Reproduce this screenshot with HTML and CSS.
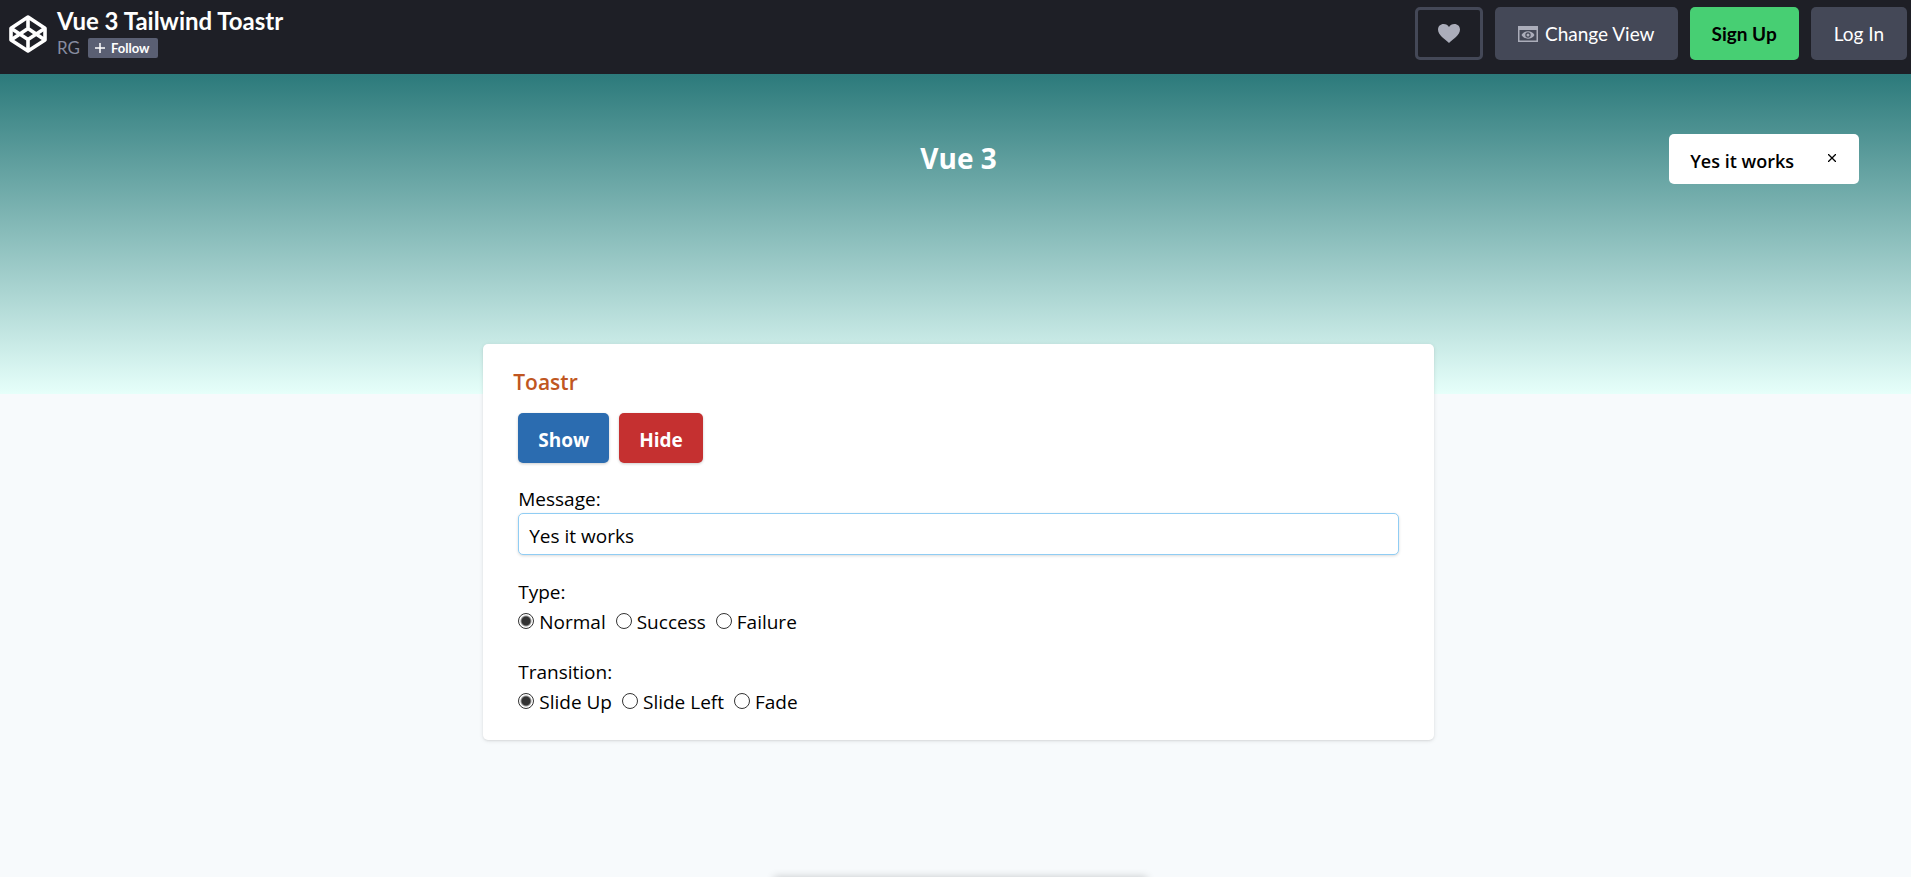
FILE: index.html
```html
<!DOCTYPE html>
<html lang="en">
<head>
<meta charset="utf-8">
<meta name="viewport" content="width=device-width, initial-scale=1">
<title>Vue 3 Tailwind Toastr</title>
<link rel="stylesheet" href="styles.css">
</head>
<body>
<header class="topbar">
  <a class="logo" href="#" aria-label="CodePen">
    <svg viewBox="0 0 38 38" width="38" height="38" fill="none" stroke="#fff" stroke-width="3.6" stroke-linejoin="round">
      <path d="M19 2 36 13.200V25L19 36 2 25V13.200Z"/>
      <path d="M19 2V13.500M19 36V24.500M2 13.200 19 24.500 36 13.200M2 25 19 13.500 36 25"/>
    </svg>
  </a>
  <div class="pen">
    <h1 class="pen-title">Vue 3 Tailwind Toastr</h1>
    <div class="pen-author">
      <a class="author" href="#">RG</a>
      <button class="follow" type="button">
        <svg viewBox="0 0 10 10" width="10" height="10" stroke="#fff" stroke-width="1.500"><path d="M5 0V10M0 5H10"/></svg>
        Follow
      </button>
    </div>
  </div>
  <nav class="actions">
    <button class="btn btn-heart" type="button" aria-label="Love">
      <svg viewBox="0 0 22 19" width="22" height="19" fill="#abadba"><path d="M11 19C7 15.500 0 11 0 5.600 0 2.200 2.500 0 5.600 0 8 0 10 1.200 11 3 12 1.200 14 0 16.400 0 19.500 0 22 2.200 22 5.600 22 11 15 15.500 11 19Z"/></svg>
    </button>
    <button class="btn" type="button">
      <svg viewBox="0 0 20 16" width="20" height="16"><path fill="#abadba" fill-rule="evenodd" d="M0 0H20V16H0ZM1.500 4V14.500H18.500V4Z"/><path fill="#abadba" fill-rule="evenodd" d="M3.500 9C5 6.500 7.300 5.300 10 5.300S15 6.500 16.500 9C15 11.500 12.700 12.700 10 12.700S5 11.500 3.500 9ZM10 6.300A2.700 2.700 0 1 0 10 11.700 2.700 2.700 0 1 0 10 6.300Z"/><circle cx="10" cy="9" r="1.500" fill="#abadba"/></svg>
      Change View
    </button>
    <button class="btn btn-green" type="button">Sign Up</button>
    <button class="btn" type="button">Log In</button>
  </nav>
</header>
<main class="page">
  <section class="hero"><h2 class="hero-title">Vue 3</h2></section>
  <div class="content">
  <form class="card">
    <h3 class="card-title">Toastr</h3>
    <div class="fields">
      <div class="buttons">
        <button class="cta cta-show" type="button">Show</button>
        <button class="cta cta-hide" type="button">Hide</button>
      </div>
      <div class="field">
        <label for="message">Message:</label>
        <input class="text" id="message" type="text" value="Yes it works">
      </div>
      <fieldset class="group">
        <legend>Type:</legend>
        <div class="options">
          <label class="option"><input type="radio" name="type" checked>Normal</label>
          <label class="option"><input type="radio" name="type">Success</label>
          <label class="option"><input type="radio" name="type">Failure</label>
        </div>
      </fieldset>
      <fieldset class="group">
        <legend>Transition:</legend>
        <div class="options">
          <label class="option"><input type="radio" name="transition" checked>Slide Up</label>
          <label class="option"><input type="radio" name="transition">Slide Left</label>
          <label class="option"><input type="radio" name="transition">Fade</label>
        </div>
      </fieldset>
    </div>
  </form>
  </div>
  <div class="toast" role="status">
    <span class="toast-text">Yes it works</span>
    <button class="toast-close" type="button" aria-label="Close"><svg viewBox="0 0 8 8" width="8" height="8" stroke="#000" stroke-width="1.300"><path d="M0 0 8 8M8 0 0 8"/></svg></button>
  </div>
  <div class="drawer"></div>
</main>
</body>
</html>
```
FILE: styles.css
```css
* { box-sizing: border-box; margin: 0; padding: 0; }
body {
  display: flex;
  flex-direction: column;
  min-height: 100vh;
  background: #f7fafc;
  color: #000;
  font-family: "Open Sans", "Noto Sans", sans-serif;
  font-size: 19px;
  line-height: 30px;
}
button, input { font: inherit; }
button { border: 0; cursor: pointer; }
a { color: inherit; text-decoration: none; }
svg { display: block; flex: none; }

.topbar {
  display: flex;
  align-items: flex-start;
  padding: 7px 4px 14px 9px;
  background: #1e1f26;
  color: #fff;
  font-family: Lato, sans-serif;
}
.logo { padding-top: 8px; }
.pen { padding-left: 10px; }
.pen-title { font-size: 24px; line-height: 28px; font-weight: 700; }
.pen-author { display: flex; align-items: center; gap: 8px; padding-top: 3px; }
.author { color: #868ca0; font-size: 17px; line-height: 20px; }
.follow {
  display: flex;
  align-items: center;
  gap: 6px;
  height: 20px;
  padding: 0 9px 0 7px;
  border-radius: 2px;
  background: #5a5f73;
  color: #fff;
  font-size: 13px;
  font-weight: 700;
}
.actions { display: flex; gap: 12px; margin-left: auto; }
.btn {
  display: flex;
  align-items: center;
  gap: 7px;
  height: 53px;
  padding: 0 23px;
  border-radius: 5px;
  background: #444857;
  color: #fff;
  font-size: 19px;
}
.btn-heart { padding: 0 20px; border: 3px solid #444857; background: none; }
.btn-green { padding: 0 22px; background: #47cf73; color: #000; font-weight: 700; }

.page { position: relative; flex: 1; overflow: hidden; }
.hero {
  height: 320px;
  padding: 64px 2px 0 8px;
  background: linear-gradient(#2c7a7b, #e6fffa);
}
.hero-title {
  color: #fff;
  font-size: 28px;
  line-height: 40px;
  font-weight: 700;
  text-align: center;
}
.content { margin-top: -50px; padding: 0 2px 0 8px; }
.card {
  width: 50%;
  margin: 0 auto;
  padding: 23px 30px;
  border-radius: 5px;
  background: #fff;
  box-shadow: 0 1px 4px rgba(0, 0, 0, .1), 0 1px 2px rgba(0, 0, 0, .06);
}
.card-title { color: #c05621; font-size: 21px; font-weight: 600; }
.fields { padding: 16px 5px 0; }
.buttons { display: flex; gap: 10px; padding-bottom: 22px; }
.cta {
  height: 50px;
  padding: 4px 20px 0;
  border-radius: 5px;
  color: #fff;
  font-weight: 700;
  box-shadow: 0 1px 3px rgba(0, 0, 0, .2);
}
.cta-show { background: #2b6cb0; }
.cta-hide { background: #c53030; }
.field { display: flex; flex-direction: column; }
.field label { line-height: 28px; }
.text {
  width: 100%;
  height: 42px;
  padding: 3px 10px 0;
  border: 1px solid #90cdf4;
  border-radius: 5px;
  background: #fff;
  box-shadow: 0 1px 3px rgba(0, 0, 0, .15);
}
.group { padding-top: 20px; border: 0; min-width: 0; }
.field + .group { padding-top: 22px; }
.group legend { float: left; width: 100%; }
.options { display: flex; clear: both; gap: 10px; }
.option { display: flex; align-items: center; gap: 5px; }
.option input {
  appearance: none;
  width: 16px;
  height: 16px;
  margin-bottom: 3px;
  border: 1px solid #333;
  border-radius: 50%;
  background: #fff;
}
.option input:checked { background: radial-gradient(circle, #333 4px, #fff 6px); }

.toast {
  position: absolute;
  top: 60px;
  right: 52px;
  display: flex;
  gap: 34px;
  padding: 12px 23px 8px 21px;
  border-radius: 5px;
  background: #fff;
  font-size: 18px;
  font-weight: 600;
}
.toast-close { align-self: flex-start; padding: 8px 0; background: none; }
.drawer {
  position: absolute;
  top: 100%;
  left: 40.5%;
  width: 19.5%;
  height: 20px;
  box-shadow: 0 0 8px rgba(0, 0, 0, .2);
}
```
